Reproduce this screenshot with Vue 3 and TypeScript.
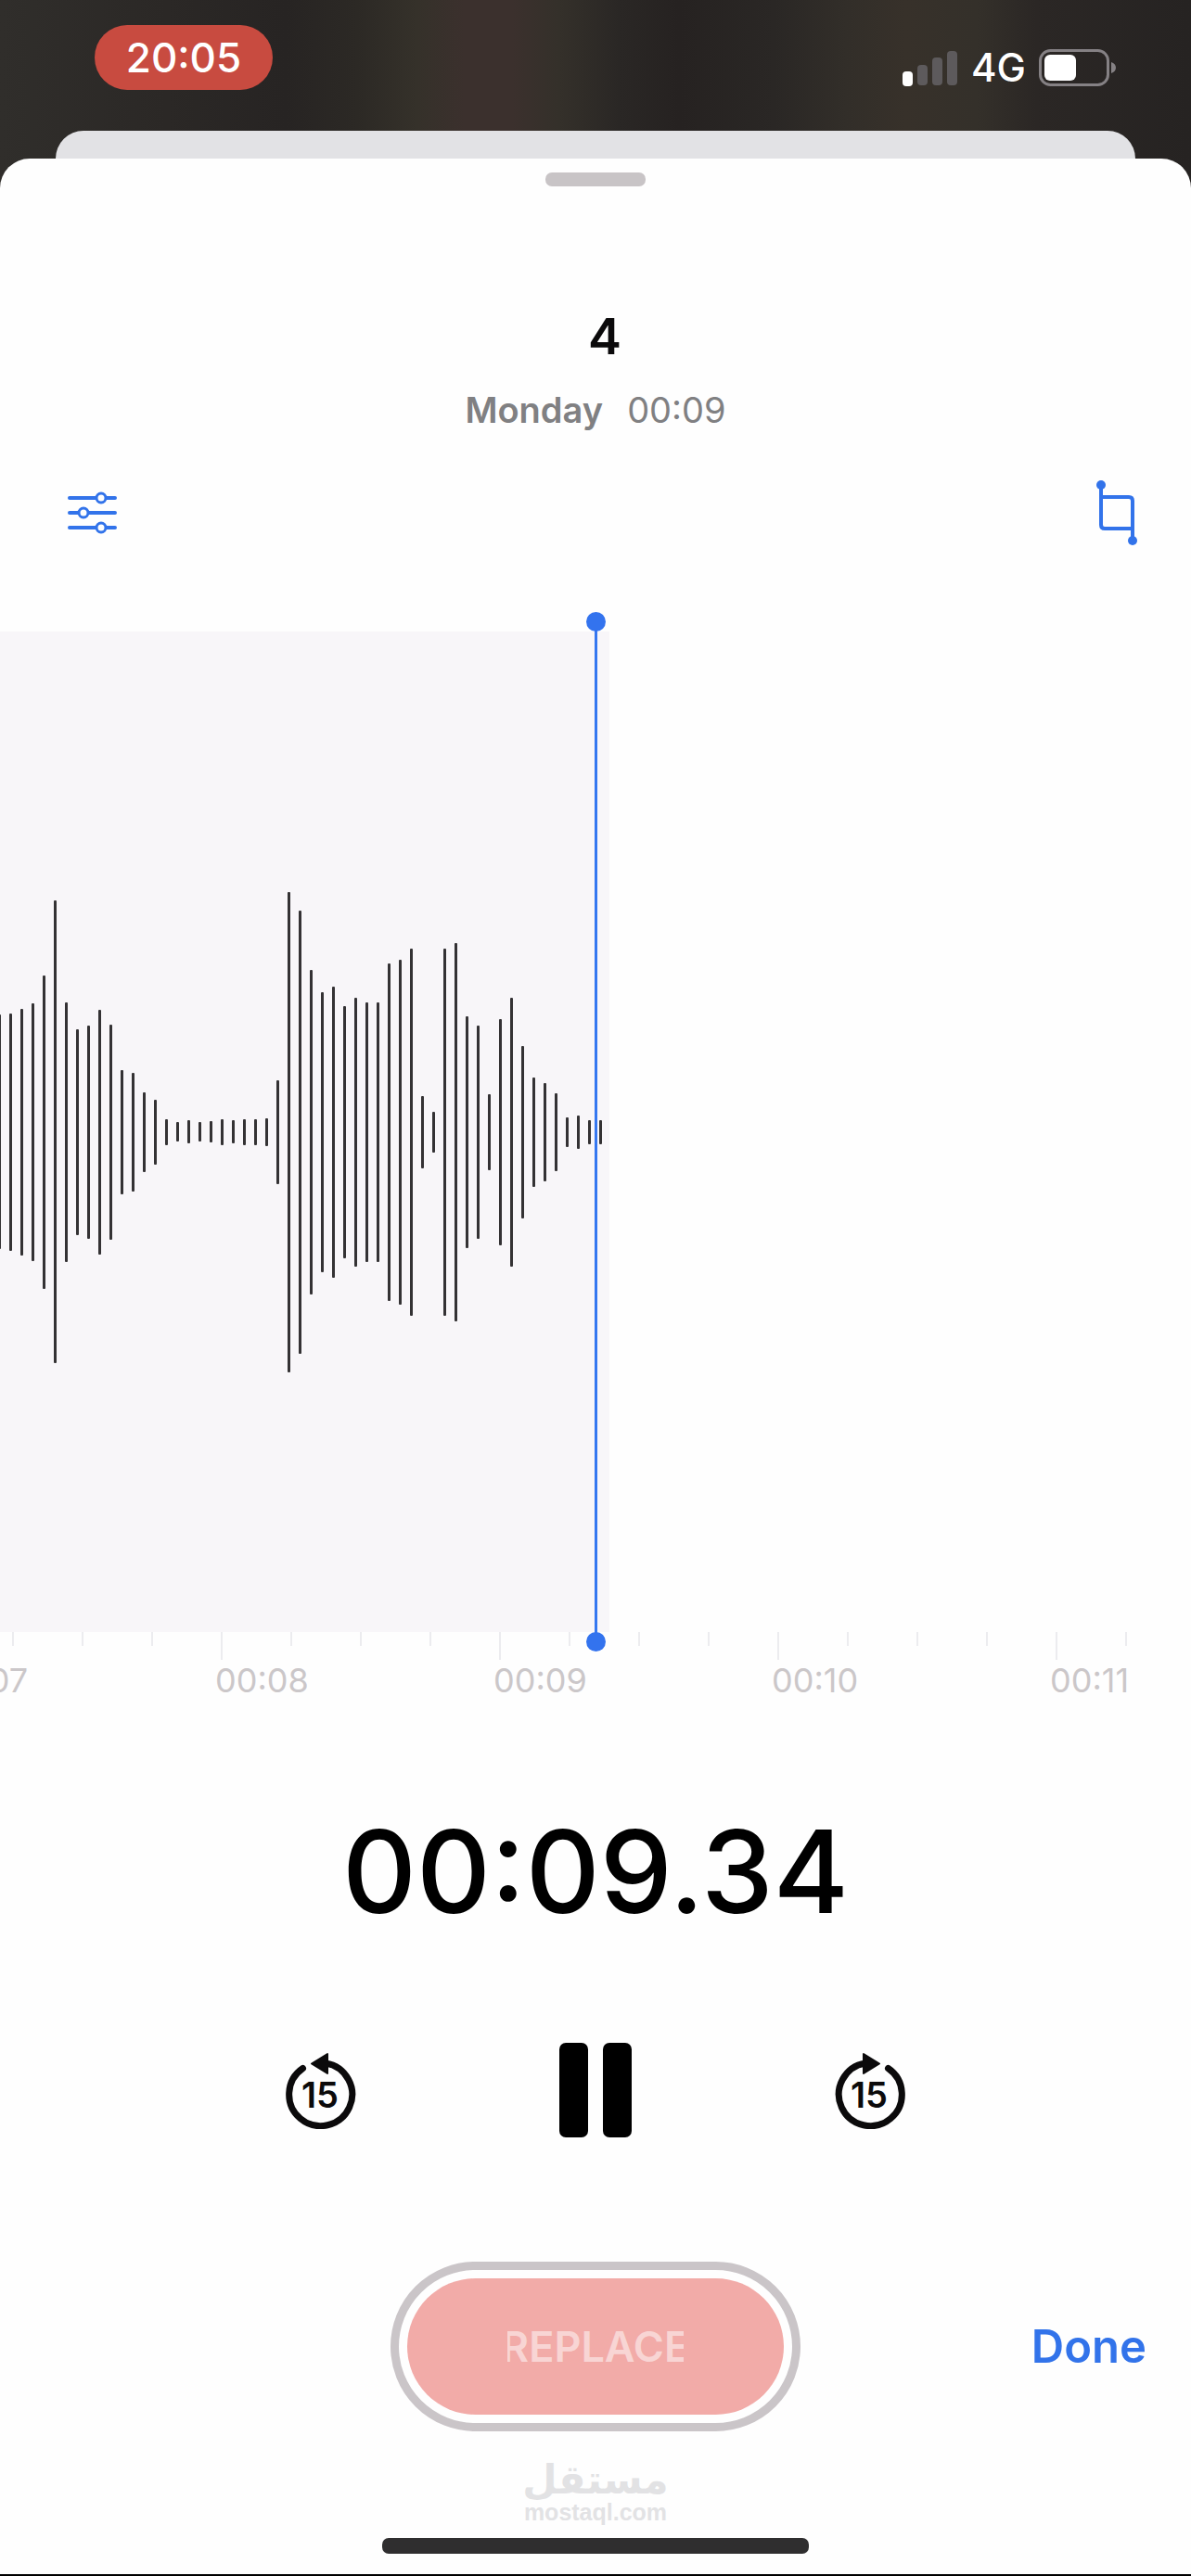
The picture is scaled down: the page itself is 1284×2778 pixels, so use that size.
<script setup lang="ts">
import { ref } from 'vue'

const title = ref('4')

const levels: number[] = [
  253, 256, 266, 278, 338, 499, 280, 222, 230, 264, 232, 134, 128, 86, 70,
  28, 21, 25, 21, 23, 28, 25, 28, 28, 30, 112, 518, 478, 350, 302, 314, 272,
  290, 280, 280, 364, 372, 396, 78, 44, 396, 408, 250, 230, 82, 244, 290,
  186, 118, 106, 84, 32, 36, 26, 26,
]

const seconds: string[] = ['00:07', '00:08', '00:09', '00:10', '00:11']
</script>

<template>
  <div class="screen">
    <header class="status">
      <span class="clock">20:05</span>
      <div class="indicators">
        <svg class="signal" width="60" height="40" viewBox="0 0 60 40" aria-hidden="true">
          <rect x="0" y="24" width="11" height="16" rx="4" fill="#fff" />
          <rect x="16" y="17" width="11" height="22" rx="4" fill="#5d5a5c" />
          <rect x="32" y="9" width="11" height="30" rx="4" fill="#5d5a5c" />
          <rect x="48" y="2" width="11" height="37" rx="4" fill="#5d5a5c" />
        </svg>
        <span class="network">4G</span>
        <svg class="battery" width="84" height="40" viewBox="0 0 84 40" aria-hidden="true">
          <rect x="1.5" y="1.5" width="73" height="37" rx="11" fill="none" stroke="#858184" stroke-width="3" />
          <rect x="6" y="6" width="34" height="28" rx="6" fill="#fff" />
          <path d="M78 14c3 1 5 3 5 6s-2 5-5 6z" fill="#858184" />
        </svg>
      </div>
    </header>
    <div class="back-sheet"></div>

    <main class="sheet">
      <div class="grabber"></div>
      <h1 class="title">{{ title }}</h1>
      <p class="meta"><span class="day">Monday</span><span>00:09</span></p>

      <div class="tools">
        <button type="button" class="icon-button" aria-label="Playback options">
          <svg width="54" height="48" viewBox="0 0 54 48" fill="none" stroke="#3273ea" stroke-width="4" stroke-linecap="round">
            <path d="M3 8h28M43 8h9M3 24h9M24 24h28M3 40h28M43 40h9" />
            <g stroke-width="3">
              <circle cx="37" cy="8" r="5" />
              <circle cx="18" cy="24" r="5" />
              <circle cx="37" cy="40" r="5" />
            </g>
          </svg>
        </button>
        <button type="button" class="icon-button" aria-label="Trim">
          <svg width="46" height="72" viewBox="0 0 46 72" fill="none" stroke="#3273ea" stroke-width="4">
            <path d="M6 6v43q0 4 4 4h29M6 19h30q4 0 4 4v43" />
            <circle cx="6" cy="6" r="5" fill="#3273ea" stroke="none" />
            <circle cx="40" cy="66" r="5" fill="#3273ea" stroke="none" />
          </svg>
        </button>
      </div>

      <section class="wave" aria-label="Waveform">
        <div class="recorded">
          <i v-for="(h, i) in levels" :key="i" class="level" :style="{ height: h + 'px' }"></i>
        </div>
        <div class="playhead"></div>
      </section>

      <div class="ruler">
        <div class="seconds">
          <div v-for="s in seconds" :key="s" class="second">
            <div class="ticks"><i></i><i></i><i></i><i></i></div>
            <span>{{ s }}</span>
          </div>
        </div>
      </div>

      <div class="timer">00:09.34</div>

      <div class="controls">
        <button type="button" class="icon-button" aria-label="Back 15 seconds">
          <svg width="76" height="84" viewBox="0 0 76 84">
            <path d="M18.5 18.5A34 34 0 1 0 43 13" fill="none" stroke="#0b0a0b" stroke-width="7" stroke-linecap="round" />
            <path d="M28 13.5 45 3v21z" fill="#0b0a0b" stroke="#0b0a0b" stroke-width="2" stroke-linejoin="round" />
            <text x="37" y="61" class="skip-label">15</text>
          </svg>
        </button>
        <button type="button" class="icon-button" aria-label="Pause">
          <svg width="78" height="102" viewBox="0 0 78 102">
            <rect width="31" height="102" rx="7" />
            <rect x="47" width="31" height="102" rx="7" />
          </svg>
        </button>
        <button type="button" class="icon-button" aria-label="Forward 15 seconds">
          <svg width="76" height="84" viewBox="0 0 76 84">
            <path d="M57.5 18.5A34 34 0 1 1 33 13" fill="none" stroke="#0b0a0b" stroke-width="7" stroke-linecap="round" />
            <path d="M48 13.5 31 3v21z" fill="#0b0a0b" stroke="#0b0a0b" stroke-width="2" stroke-linejoin="round" />
            <text x="37" y="61" class="skip-label">15</text>
          </svg>
        </button>
      </div>

      <div class="actions">
        <button type="button" class="replace"><span class="fill"><span class="word">REPLACE</span></span></button>
        <button type="button" class="done">Done</button>
      </div>

      <div class="brand">
        <span class="brand-ar" lang="ar" dir="rtl">مستقل</span>
        <span class="brand-en">mostaql.com</span>
      </div>
      <div class="home"></div>
    </main>
  </div>
</template>

<style>
body {
  margin: 0;
}
</style>

<style scoped>
.screen {
  display: flex;
  flex-direction: column;
  min-height: 100vh;
  box-sizing: border-box;
  border-bottom: 2px solid #000;
  overflow: hidden;
  font-family: Inter, "Noto Sans", sans-serif;
  background: linear-gradient(90deg, #302e2b 0%, #2b2826 14%, #272423 24%, #2c2925 30%, #35312a 35%, #3b302d 39%, #3b302d 43%, #34302a 47%, #2a2725 52%, #262221 57%, #2a2725 65%, #322e29 71%, #37312a 76%, #34302a 82%, #2b2725 87%, #262322 100%);
}
button {
  margin: 0;
  padding: 0;
  border: 0;
  background: none;
  font-family: inherit;
  cursor: pointer;
}
svg {
  display: block;
}
.status {
  display: flex;
  justify-content: space-between;
  align-items: flex-start;
  height: 141px;
  box-sizing: border-box;
  padding: 27px 80px 0 102px;
}
.clock {
  width: 192px;
  border-radius: 35px;
  background: #c84b40;
  color: #fff;
  font-size: 44px;
  font-weight: 500;
  line-height: 70px;
  text-align: center;
}
.indicators {
  display: flex;
  align-items: center;
  gap: 14px;
  height: 92px;
}
.network {
  color: #fff;
  font-size: 42px;
  font-weight: 500;
  line-height: 48px;
}
.back-sheet {
  height: 30px;
  margin: 0 60px;
  border-radius: 30px 30px 0 0;
  background: #e2e2e5;
}
.sheet {
  display: flex;
  flex: 1;
  flex-direction: column;
  border-radius: 32px 32px 0 0;
  background: #fefefe;
}
.grabber {
  align-self: center;
  width: 108px;
  height: 15px;
  margin-top: 15px;
  border-radius: 7px;
  background: #c8c4c6;
}
.title {
  margin: 130px 0 0 20px;
  color: #0b0a0b;
  font-size: 54px;
  font-weight: 600;
  line-height: 64px;
  text-align: center;
}
.meta {
  display: flex;
  justify-content: center;
  gap: 26px;
  margin: 23px 0 0;
  color: #808082;
  font-size: 38px;
  line-height: 48px;
}
.day {
  font-weight: 600;
}
.tools {
  display: flex;
  justify-content: space-between;
  align-items: center;
  margin-top: 51px;
  padding: 0 57px 0 72px;
}
.wave {
  position: relative;
  display: flex;
  flex: 1;
  min-height: 540px;
  margin-top: 92px;
}
.recorded {
  display: flex;
  justify-content: flex-end;
  align-items: center;
  gap: 9px;
  width: calc(50% + 15px);
  box-sizing: border-box;
  padding-right: 8px;
  overflow: hidden;
  background: #f8f6f9;
}
.level {
  flex: none;
  width: 3px;
  border-radius: 1px;
  background: #343234;
}
.playhead {
  position: absolute;
  top: -12px;
  bottom: -12px;
  left: 50%;
  width: 3px;
  margin-left: -1px;
  background: #3577f0;
}
.playhead::before,
.playhead::after {
  content: "";
  position: absolute;
  left: -9px;
  width: 21px;
  height: 21px;
  border-radius: 50%;
  background: #3373ee;
}
.playhead::before {
  top: -9px;
}
.playhead::after {
  bottom: -9px;
}
.ruler {
  overflow: hidden;
}
.seconds {
  display: flex;
  margin-left: calc(50% - 704px);
}
.second {
  flex: none;
  width: 300px;
  color: #cbc7c9;
  font-size: 36px;
  font-weight: 400;
  line-height: 44px;
}
.second span {
  margin-left: -6px;
}
.ticks {
  display: flex;
  height: 30px;
}
.ticks i {
  width: 75px;
  height: 15px;
  box-sizing: border-box;
  border-left: 2px solid #ececef;
}
.ticks i:first-child {
  height: 30px;
}
.timer {
  margin-top: 124px;
  color: #000;
  font-size: 124px;
  font-weight: 500;
  line-height: 120px;
  text-align: center;
}
.controls {
  display: flex;
  justify-content: center;
  align-items: center;
  gap: 219px;
  margin-top: 125px;
}
.skip-label {
  fill: #0b0a0b;
  font-size: 38px;
  font-weight: 600;
  text-anchor: middle;
}
.actions {
  display: grid;
  grid-template-columns: 1fr auto 1fr;
  align-items: center;
  margin-top: 134px;
  padding: 0 48px;
}
.replace {
  grid-column: 2;
  width: 442px;
  box-sizing: border-box;
  padding: 9px;
  border: 9px solid #cac5c8;
  border-radius: 92px;
}
.fill {
  display: flex;
  justify-content: center;
  border-radius: 74px;
  background: #f2aba8;
}
.word {
  display: flex;
  justify-content: center;
  width: 190px;
  overflow: hidden;
  color: #f8d5d4;
  font-size: 45px;
  font-weight: 600;
  line-height: 147px;
}
.done {
  justify-self: end;
  color: #3273ea;
  font-size: 49px;
  font-weight: 600;
  line-height: 64px;
}
.brand {
  display: flex;
  flex-direction: column;
  align-items: center;
  margin-top: 27px;
  color: #e2e2e4;
}
.brand-ar {
  font-family: "DejaVu Sans", sans-serif;
  font-size: 43px;
  font-weight: 700;
  line-height: 50px;
}
.brand-en {
  font-family: "Liberation Sans", sans-serif;
  font-size: 25px;
  font-weight: 700;
  line-height: 20px;
}
.home {
  align-self: center;
  width: 460px;
  height: 17px;
  margin: 18px 0 22px;
  border-radius: 7px;
  background: #2f2e2f;
}
</style>
